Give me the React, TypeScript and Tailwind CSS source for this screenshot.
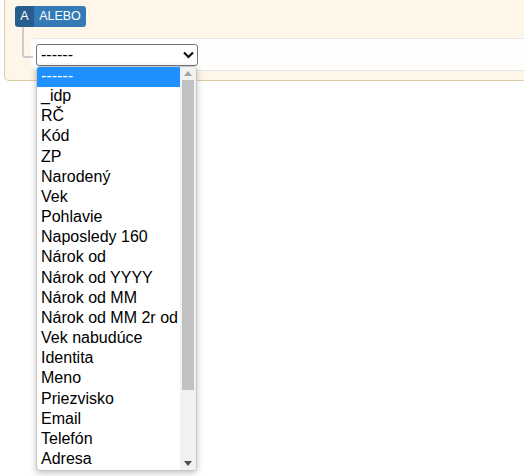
import React from "react";

const items = [
  "------",
  "_idp",
  "RČ",
  "Kód",
  "ZP",
  "Narodený",
  "Vek",
  "Pohlavie",
  "Naposledy 160",
  "Nárok od",
  "Nárok od YYYY",
  "Nárok od MM",
  "Nárok od MM 2r od",
  "Vek nabudúce",
  "Identita",
  "Meno",
  "Priezvisko",
  "Email",
  "Telefón",
  "Adresa",
];

export default function App() {
  return (
    <div
      className="relative w-[524px] h-[476px] overflow-hidden bg-white"
      style={{ fontFamily: '"Liberation Sans", Arial, sans-serif' }}
    >
      <div className="ml-[4px] h-[81px] bg-[#fdf6e9] border-l border-b border-[#dccfa4] rounded-bl-[5px] pt-[6px] pl-[10px]">
        <div className="flex h-[21px] w-[71px] rounded-[3px] overflow-hidden text-white text-[12.5px] leading-[21px]">
          <div className="w-[19px] bg-[#285e8e] text-center">A</div>
          <div className="flex-1 bg-[#337ab7] text-center">ALEBO</div>
        </div>
        <div className="relative mt-[11px] ml-[16px] h-[33px] bg-[#fffefc] border-t border-b border-[#e6e6e6] rounded-l-[5px] pl-[5px] pt-[5px]">
          <div className="absolute left-[-9px] top-[-12px] w-[11px] h-[31px] border-l-2 border-b-2 border-[#cccccc] rounded-bl-[3px]" />
          <div className="w-[162px] h-[22px] bg-white border border-[#767676] rounded-[3px] flex items-center justify-between pl-[4px] pr-[3px] text-[16px] leading-[20px] text-black">
            <span>------</span>
            <svg width="11" height="8" viewBox="0 0 11 8">
              <path d="M1 1.5 L5.5 6 L10 1.5" fill="none" stroke="#111" strokeWidth="2.2" />
            </svg>
          </div>
        </div>
      </div>

      <div className="absolute left-[36px] top-[66px] w-[161px] h-[405px] bg-white border border-[#c8c8c8] rounded-[4px] shadow-[0_2px_6px_rgba(0,0,0,0.25)] flex overflow-hidden">
        <div className="flex-1 flex flex-col">
          {items.map((t, i) => (
            <div
              key={i}
              className={
                i === 0
                  ? "h-[20.16px] leading-[18px] pl-[4px] text-[16px] bg-[#1e90ff] text-white whitespace-nowrap"
                  : "h-[20.16px] leading-[18px] pl-[4px] text-[16px] text-black whitespace-nowrap"
              }
            >
              {t}
            </div>
          ))}
        </div>
        <div className="w-[16px] bg-[#f1f1f1] flex flex-col items-center">
          <div className="h-[13px] flex items-center justify-center">
            <svg width="8" height="5" viewBox="0 0 8 5">
              <path d="M0 5 L4 0 L8 5 Z" fill="#a3a3a3" />
            </svg>
          </div>
          <div className="w-[12px] h-[310px] bg-[#c1c1c1]" />
          <div className="flex-1" />
          <div className="h-[14px] flex items-center justify-center">
            <svg width="8" height="5" viewBox="0 0 8 5">
              <path d="M0 0 L4 5 L8 0 Z" fill="#505050" />
            </svg>
          </div>
        </div>
      </div>
    </div>
  );
}
